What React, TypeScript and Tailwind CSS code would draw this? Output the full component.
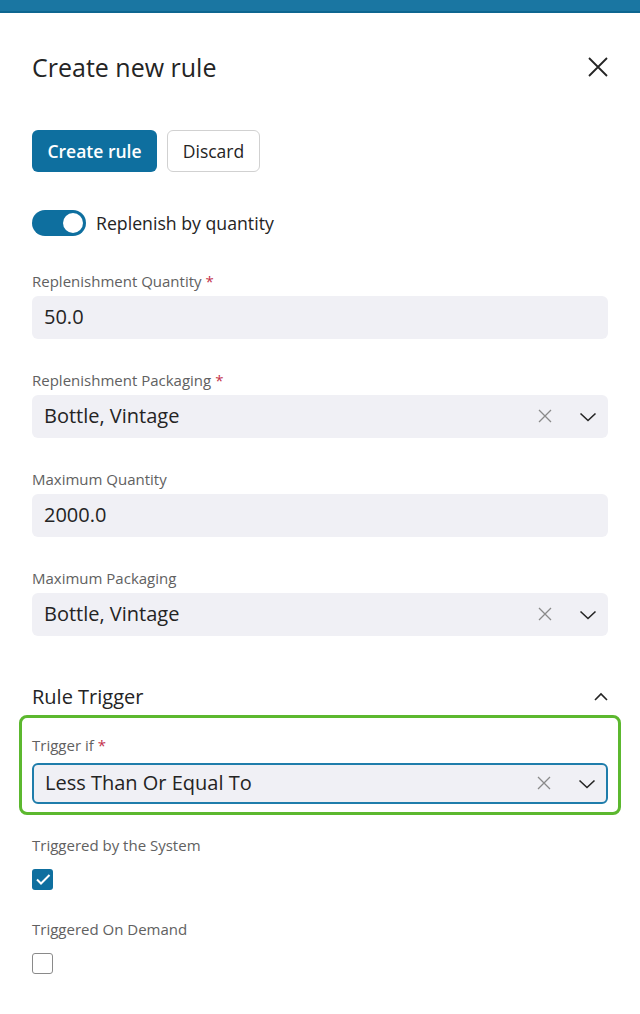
import React from 'react';

const font = { fontFamily: '"Segoe UI", "Open Sans", "Noto Sans", sans-serif' };

function Label({ text, required }: { text: string; required?: boolean }) {
  return (
    <div className="text-[15px] leading-5 text-[#616161]">
      {text}
      {required && <span className="ml-1 text-[#c4314b]">*</span>}
    </div>
  );
}

function Chevron({ up }: { up?: boolean }) {
  return (
    <svg width="18" height="18" viewBox="0 0 18 18" fill="none" stroke="#242424" strokeWidth={1.6}>
      {up ? <path d="M3 12l6-6 6 6" /> : <path d="M1.5 6.5l7.5 7 7.5-7" />}
    </svg>
  );
}

function ClearIcon() {
  return (
    <svg width="16" height="16" viewBox="0 0 16 16" fill="none" stroke="#8a8a8a" strokeWidth={1.3}>
      <path d="M2 2l12 12M14 2L2 14" />
    </svg>
  );
}

function TextField({ label, value, required }: { label: string; value: string; required?: boolean }) {
  return (
    <div className="flex flex-col gap-[5px]">
      <Label text={label} required={required} />
      <div className="h-[43px] rounded-md bg-[#f0f0f5] px-3 flex items-center text-[20px] text-[#242424]">{value}</div>
    </div>
  );
}

function SelectField({ label, value, required, focused }: { label: string; value: string; required?: boolean; focused?: boolean }) {
  return (
    <div className={focused ? 'flex flex-col gap-[8px]' : 'flex flex-col gap-[5px]'}>
      <Label text={label} required={required} />
      <div
        className={
          focused
            ? 'h-[41px] rounded-md bg-[#f0f0f5] pl-[11px] pr-[10px] flex items-center text-[20px] text-[#242424] border-2 border-[#1f7dab]'
            : 'h-[43px] rounded-md bg-[#f0f0f5] pl-3 pr-[11px] flex items-center text-[20px] text-[#242424]'
        }
      >
        <span className="flex-1">{value}</span>
        <span className="mr-[26px] flex items-center"><ClearIcon /></span>
        <Chevron />
      </div>
    </div>
  );
}

export default function App() {
  return (
    <div className="min-h-screen bg-white" style={font}>
      <div className="h-[13px] bg-[#1a76a2] border-b-2 border-[#0d6690]" />

      <div className="px-8 pt-[38px]">
        {/* Header */}
        <div className="flex items-center justify-between">
          <h1 className="text-[25px] leading-8 text-[#242424]">Create new rule</h1>
          <svg width="22" height="22" viewBox="0 0 22 22" fill="none" stroke="#242424" strokeWidth={1.8} className="mr-[-1px]">
            <path d="M2 2l18 18M20 2L2 20" />
          </svg>
        </div>

        {/* Actions */}
        <div className="flex gap-[10px] mt-[47px]">
          <button className="h-[42px] w-[125px] rounded-md bg-[#0e6f9f] text-white text-[17.5px] font-semibold">Create rule</button>
          <button className="h-[42px] w-[93px] rounded-md border border-[#d1d1d1] bg-white text-[17.5px] text-[#242424]">Discard</button>
        </div>

        {/* Toggle */}
        <div className="flex items-center gap-[10px] mt-[38px]">
          <div className="w-[54px] h-[26px] rounded-full bg-[#0e6f9f] flex items-center justify-end pr-[3px]">
            <div className="w-[20px] h-[20px] rounded-full bg-white" />
          </div>
          <span className="text-[17.7px] text-[#242424]">Replenish by quantity</span>
        </div>

        <div className="flex flex-col gap-[31px] mt-[34px]">
          <TextField label="Replenishment Quantity" value="50.0" required />
          <SelectField label="Replenishment Packaging" value="Bottle, Vintage" required />
          <TextField label="Maximum Quantity" value="2000.0" />
          <SelectField label="Maximum Packaging" value="Bottle, Vintage" />
        </div>

        {/* Rule Trigger section */}
        <div className="flex items-center justify-between mt-[46px]">
          <h2 className="text-[20px] text-[#242424]">Rule Trigger</h2>
          <span className="mr-[-2px]"><Chevron up /></span>
        </div>

        <div className="mt-[3px] -mx-[13px] rounded-lg border-[3px] border-[#5cb82f] px-[10px] pt-[17px] pb-[8px]">
          <SelectField label="Trigger if" value="Less Than Or Equal To" required focused />
        </div>

        <div className="flex flex-col mt-[20px]">
          <Label text="Triggered by the System" />
          <div className="w-[21px] h-[21px] rounded-[3px] bg-[#0e6f9f] flex items-center justify-center mt-[14px]">
            <svg width="18" height="18" viewBox="0 0 18 18" fill="none" stroke="white" strokeWidth={2}>
              <path d="M3 9.5l4 4L15.5 5" />
            </svg>
          </div>
        </div>

        <div className="flex flex-col mt-[29px]">
          <Label text="Triggered On Demand" />
          <div className="w-[21px] h-[21px] rounded-[3px] border border-[#8a8a8a] bg-white mt-[14px]" />
        </div>
      </div>
    </div>
  );
}
